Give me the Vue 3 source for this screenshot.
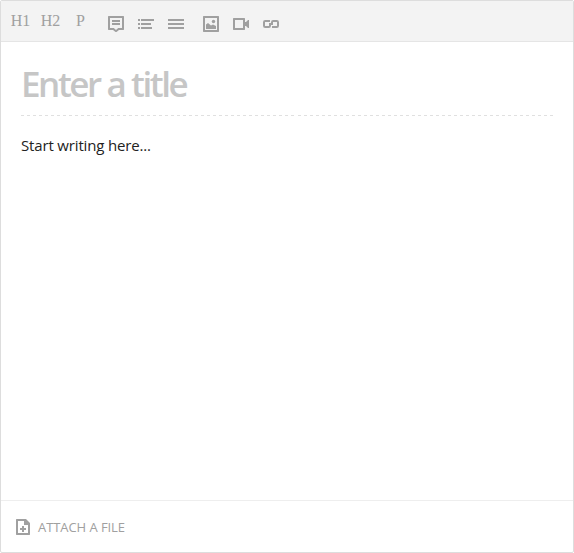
<script setup>
import { ref } from 'vue'

const formats = ['H1', 'H2', 'P']
const title = ref('Enter a title')
const body = ref('Start writing here...')
</script>

<template>
  <div class="editor">
    <header class="toolbar">
      <div class="formats">
        <span v-for="f in formats" :key="f" class="format">{{ f }}</span>
      </div>
      <div class="icons">
        <svg viewBox="0 0 16 16">
          <path fill-rule="evenodd" d="M.5 0H15.5L16 .5V13.5L15.5 14H11L8.5 16H7.5L5 14H.5L0 13.5V.5ZM2 2V12H5.8L8 14L10.2 12H14V2Z" />
          <path d="M4 4H12V6H4ZM4 7H12V9H4Z" />
        </svg>
        <svg viewBox="0 0 16 16">
          <path d="M0 3H2V5H0ZM3 3H16V5H3ZM0 7H2V9H0ZM3 7H13V9H3ZM0 11H2V13H0ZM3 11H14V13H3Z" />
        </svg>
        <svg viewBox="0 0 16 16">
          <path d="M0 3H16V5H0ZM0 7H16V9H0ZM0 11H16V13H0Z" />
        </svg>
      </div>
      <div class="icons">
        <svg viewBox="0 0 16 16">
          <path fill-rule="evenodd" d="M.5 0H15.5L16 .5V15.5L15.5 16H.5L0 15.5V.5ZM2 2V14H14V2Z" />
          <path d="M3 13V8.5L5 7L8 9.5L10 8.5L13 10V13Z" />
          <circle cx="10.5" cy="5.5" r="1.7" />
        </svg>
        <svg viewBox="0 0 16 16">
          <path fill-rule="evenodd" d="M.5 2H11.5L12 2.5V6H13L15 4H16V12H15L13 10H12V13.5L11.5 14H.5L0 13.5V2.5ZM2 4V12H10V4Z" />
        </svg>
        <svg viewBox="0 0 16 16" class="link">
          <path d="M7 5H2.2Q1 5 1 6.2V9.8Q1 11 2.2 11H5.8Q7 11 7 9.8V8H10" />
          <path d="M9 11H13.8Q15 11 15 9.8V6.2Q15 5 13.8 5H10.2Q9 5 9 6.2V8H6" />
        </svg>
      </div>
    </header>
    <main class="content">
      <h1 class="title">{{ title }}</h1>
      <p class="body">{{ body }}</p>
    </main>
    <footer class="footer">
      <svg viewBox="0 0 14 16">
        <path fill-rule="evenodd" d="M.5 0H10L14 4V15.5L13.5 16H.5L0 15.5V.5ZM2 2V14H12V6H8V2Z" />
        <path d="M6 7H8V9H10V11H8V13H6V11H4V9H6Z" />
      </svg>
      <span>ATTACH A FILE</span>
    </footer>
  </div>
</template>

<style>
body {
  margin: 0;
  background: #fff;
}
</style>

<style scoped>
.editor {
  box-sizing: border-box;
  width: 574px;
  height: 553px;
  display: flex;
  flex-direction: column;
  border: 1px solid #ddd;
  border-radius: 2px;
  background: #fff;
  font-family: "Open Sans", sans-serif;
  overflow: hidden;
}
svg {
  display: block;
  height: 16px;
  fill: #a0a0a0;
}
.toolbar {
  flex: none;
  display: flex;
  height: 40px;
  padding-left: 4px;
  background: #f3f3f3;
  border-bottom: 1px solid #e5e5e5;
}
.formats {
  display: flex;
}
.format {
  box-sizing: border-box;
  width: 30px;
  padding: 10px 0 0 1px;
  text-align: center;
  font: 16px/20px "Liberation Serif", serif;
  color: #a0a0a0;
}
.icons {
  display: flex;
  gap: 14px;
  padding: 15px 0 0 13px;
}
.icons + .icons {
  padding-left: 19px;
}
.icons svg {
  width: 16px;
}
.icons .link {
  fill: none;
  stroke: #a0a0a0;
  stroke-width: 2;
}
.content {
  flex: 1;
  padding: 0 20px;
}
.title {
  margin: 0;
  height: 74px;
  padding-top: 18px;
  box-sizing: border-box;
  font-size: 35px;
  line-height: 48px;
  font-weight: 600;
  letter-spacing: -2.42px;
  color: #c6c6c6;
  background: repeating-linear-gradient(90deg, #e0e0e0 0 3px, transparent 3px 6.011px) bottom / 100% 1px no-repeat;
}
.body {
  margin: 19px 0 0;
  font-size: 15px;
  line-height: 20px;
  letter-spacing: -0.16px;
  color: #222;
}
.footer {
  flex: none;
  display: flex;
  align-items: center;
  gap: 8px;
  height: 51px;
  padding-left: 15px;
  border-top: 1px solid #eee;
  font-size: 13px;
  letter-spacing: -0.07px;
  color: #a0a0a0;
}
.footer svg {
  width: 14px;
}
</style>
